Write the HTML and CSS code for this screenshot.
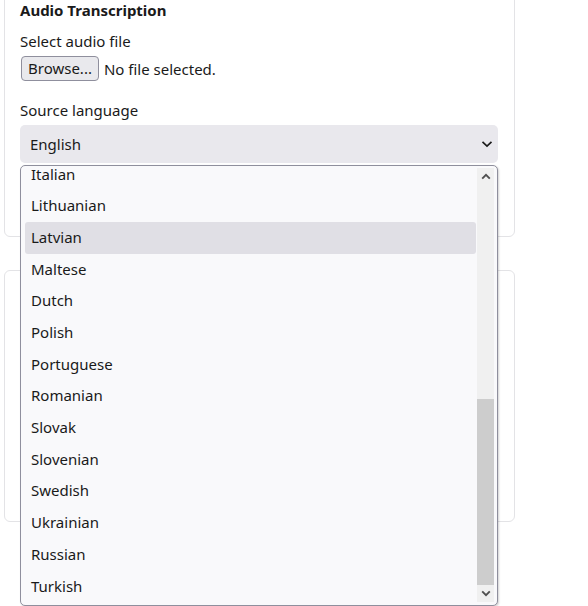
FILE: index.html
```html
<!DOCTYPE html>
<html lang="en">
<head>
<meta charset="utf-8">
<title>Audio Transcription</title>
<link rel="stylesheet" href="styles.css">
</head>
<body>
<div class="page">
  <section class="card card-first">
    <h5 class="card-title">Audio Transcription</h5>
    <label class="form-label">Select audio file</label>
    <div class="file-row">
      <span class="browse">Browse...</span>
      <span class="file-status">No file selected.</span>
    </div>
    <label class="form-label">Source language</label>
    <div class="select-wrap">
      <div class="select">
        <span>English</span>
        <svg class="chev" width="12" height="8" viewBox="0 0 12 8"><path d="M1.5 1.8 L6 6 L10.5 1.8" fill="none" stroke="#1b1b1b" stroke-width="1.7"/></svg>
      </div>
      <div class="dropdown">
        <ul class="options">
          <li>Italian</li>
          <li>Lithuanian</li>
          <li class="active">Latvian</li>
          <li>Maltese</li>
          <li>Dutch</li>
          <li>Polish</li>
          <li>Portuguese</li>
          <li>Romanian</li>
          <li>Slovak</li>
          <li>Slovenian</li>
          <li>Swedish</li>
          <li>Ukrainian</li>
          <li>Russian</li>
          <li>Turkish</li>
        </ul>
        <div class="scrollbar">
          <div class="sb-btn">
            <svg width="10" height="7" viewBox="0 0 10 7"><path d="M1.2 5.6 L5 1.8 L8.8 5.6" fill="none" stroke="#505050" stroke-width="1.9"/></svg>
          </div>
          <div class="sb-track"><div class="sb-thumb"></div></div>
          <div class="sb-btn">
            <svg width="10" height="7" viewBox="0 0 10 7"><path d="M1.2 1.4 L5 5.2 L8.8 1.4" fill="none" stroke="#505050" stroke-width="1.9"/></svg>
          </div>
        </div>
      </div>
    </div>
  </section>
  <section class="card card-second"></section>
</div>
</body>
</html>
```
FILE: styles.css
```css
* { box-sizing: border-box; }
html, body { margin: 0; padding: 0; background: #fff; overflow: hidden; }
body {
  font-family: "Noto Sans", "Open Sans", sans-serif;
  font-size: 15px;
  color: #1a1a1a;
  height: 606px;
}
.page {
  width: 511px;
  margin: -18px 0 0 4px;
  display: flex;
  flex-direction: column;
  gap: 33px;
}
.card {
  border: 1px solid #e3e3e6;
  border-radius: 6px;
  background: #fff;
}
.card-first {
  padding: 15px 16px 73px 15px;
  display: flex;
  flex-direction: column;
}
.card-second { height: 252px; }
.card-title {
  margin: 0 0 7px;
  font-size: 15px;
  font-weight: 700;
  line-height: 24px;
}
.form-label {
  display: block;
  line-height: 24px;
  margin-bottom: 3px;
}
.file-row {
  display: flex;
  align-items: center;
  gap: 5px;
  margin-bottom: 17px;
}
.browse {
  display: inline-block;
  height: 25px;
  line-height: 23px;
  padding: 0 6px;
  margin-left: 1px;
  background: #e9e9ed;
  border: 1px solid #8f8f9d;
  border-radius: 4px;
  font-size: 15px;
}
.select-wrap { position: relative; }
.select {
  height: 38px;
  background: #e9e8ed;
  border-radius: 5px;
  display: flex;
  align-items: center;
  justify-content: space-between;
  padding: 0 5px 0 10px;
}
.dropdown {
  position: absolute;
  top: 40px;
  left: 0;
  width: 478px;
  height: 441px;
  background: #f9f9fb;
  border: 1px solid #8f8f9d;
  border-radius: 5px;
  box-shadow: 1px 1px 2px rgba(0,0,0,0.18);
  overflow: hidden;
  z-index: 5;
}
.options {
  list-style: none;
  margin: -7.4px 0 0;
  padding: 0 21px 0 4px;
}
.options li {
  height: 31.7px;
  line-height: 31.7px;
  padding-left: 6px;
  border-radius: 3px;
}
.options li.active { background: #e0dfe5; }
.scrollbar {
  position: absolute;
  top: 2px;
  right: 3px;
  bottom: 3px;
  width: 17px;
  background: #f0f0f0;
  display: flex;
  flex-direction: column;
}
.sb-btn {
  height: 17px;
  display: flex;
  align-items: center;
  justify-content: center;
}
.sb-track {
  flex: 1;
  display: flex;
  flex-direction: column;
  justify-content: flex-end;
}
.sb-thumb {
  height: 186px;
  background: #cdcdcd;
}
```
